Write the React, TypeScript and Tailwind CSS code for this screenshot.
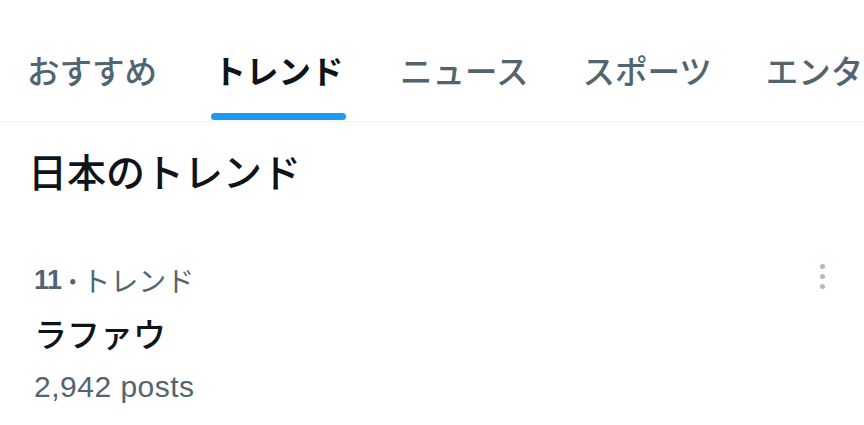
import React from 'react';

const tabs = ['おすすめ', 'トレンド', 'ニュース', 'スポーツ', 'エンターテインメント'];

const font = { fontFamily: '"Noto Sans CJK JP", "Noto Sans", sans-serif' };

export default function App() {
  return (
    <div className="w-[864px] h-[425px] overflow-hidden bg-white" style={font}>
      {/* tab bar */}
      <nav className="flex h-[122px] border-b border-[#eff3f4] overflow-hidden whitespace-nowrap">
        {tabs.map((t, i) => {
          const active = i === 1;
          return (
            <div key={t} className="flex flex-col items-center px-[27px] pt-[46px] shrink-0">
              <span
                className={
                  active
                    ? 'text-[32.5px] leading-[48px] font-bold text-[#0f1419]'
                    : 'text-[32.5px] leading-[48px] font-medium text-[#536471]'
                }
              >
                {t}
              </span>
              {active && <div className="mt-auto mb-[1px] h-[7px] w-[135px] rounded-full bg-[#1d9bf0]" />}
            </div>
          );
        })}
      </nav>

      {/* section title */}
      <h2 className="pl-[28px] pt-[21px] text-[39px] leading-[54px] font-medium text-[#0f1419]">日本のトレンド</h2>

      {/* trend item */}
      <div className="flex justify-between pl-[34px] pr-[39px] pt-[64px]">
        <div className="flex flex-col">
          <div className="flex items-center text-[28px] leading-[38px] text-[#536471]">
            <span
              className="font-bold text-[27px] tracking-[-0.5px]"
              style={{ fontFamily: '"Liberation Sans", sans-serif' }}
            >
              11
            </span>
            <span className="ml-[3px] mr-[1px] font-bold">·</span>
            <span>トレンド</span>
          </div>
          <div className="mt-[12px] text-[33px] leading-[44px] font-medium text-[#0f1419]">ラファウ</div>
          <div
            className="mt-[14px] text-[30px] leading-[36px] tracking-[0.5px] text-[#536471]"
            style={{ fontFamily: '"Liberation Sans", "Noto Sans CJK JP", sans-serif' }}
          >
            2,942 posts
          </div>
        </div>
        <div className="flex flex-col gap-[5px] pt-[3px]">
          <span className="block w-[5px] h-[5px] rounded-full bg-[#aebbc4]" />
          <span className="block w-[5px] h-[5px] rounded-full bg-[#aebbc4]" />
          <span className="block w-[5px] h-[5px] rounded-full bg-[#aebbc4]" />
        </div>
      </div>
    </div>
  );
}
